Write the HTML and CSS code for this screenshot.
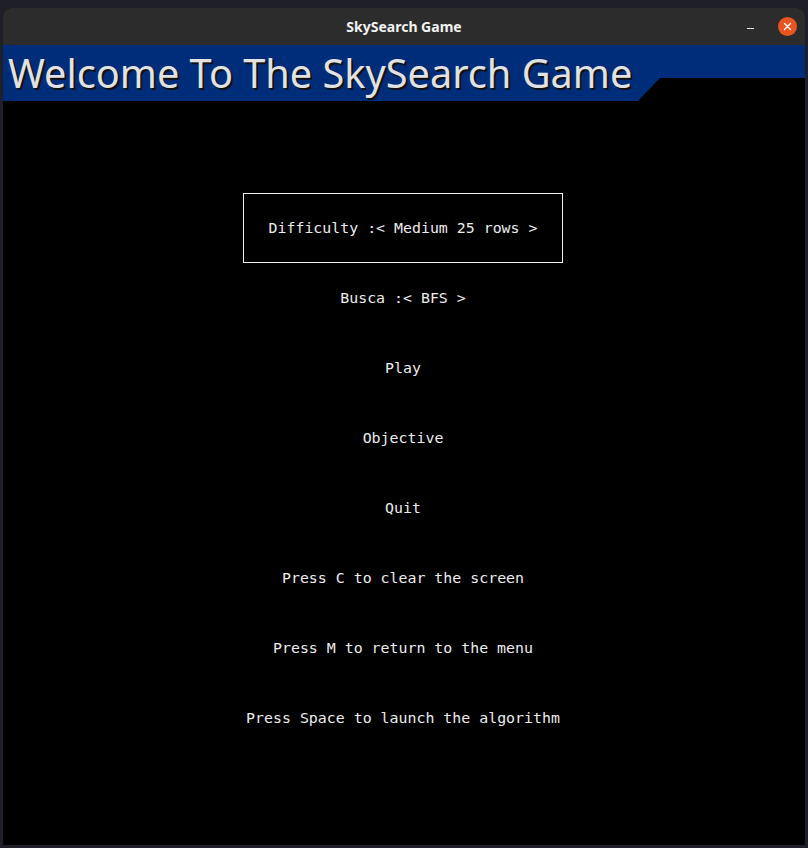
FILE: index.html
```html
<!DOCTYPE html>
<html>
<head>
<meta charset="utf-8">
<title>SkySearch Game</title>
<link rel="stylesheet" href="styles.css">
</head>
<body>
<div class="window">
  <div class="titlebar">
    <span class="title">SkySearch Game</span>
    <div class="controls">
      <span class="minimize"></span>
      <span class="close">
        <svg width="19" height="19" viewBox="0 0 19 19"><circle cx="9.5" cy="9.5" r="9.5" fill="#e95420"/><path d="M6.5 6.5 L12.5 12.5 M12.5 6.5 L6.5 12.5" stroke="#fff" stroke-width="1.3" stroke-linecap="round"/></svg>
      </span>
    </div>
  </div>
  <div class="content">
    <div class="banner">
      <h1 class="heading">Welcome To The SkySearch Game</h1>
    </div>
    <div class="menu">
      <div class="item selected">Difficulty :&lt; Medium 25 rows &gt;</div>
      <div class="item">Busca :&lt; BFS &gt;</div>
      <div class="item">Play</div>
      <div class="item">Objective</div>
      <div class="item">Quit</div>
      <div class="item">Press C to clear the screen</div>
      <div class="item">Press M to return to the menu</div>
      <div class="item">Press Space to launch the algorithm</div>
    </div>
  </div>
</div>
</body>
</html>
```
FILE: styles.css
```css
html, body {
  margin: 0;
  padding: 0;
  background: #1e1f29;
  width: 808px;
  height: 848px;
  overflow: hidden;
}
.window {
  margin: 8px 3px 0 3px;
  width: 802px;
  height: 837px;
  border-radius: 8px 8px 0 0;
  overflow: hidden;
  background: #000;
}
.titlebar {
  position: relative;
  height: 37px;
  background: #2c2c2c;
  display: flex;
  align-items: center;
  justify-content: center;
}
.title {
  font-family: "Noto Sans", "Open Sans", sans-serif;
  font-weight: 700;
  font-size: 14px;
  color: #f2f2f2;
}
.controls {
  position: absolute;
  right: 8px;
  top: 9px;
  display: flex;
  align-items: center;
  gap: 24px;
}
.minimize {
  display: block;
  width: 7px;
  height: 1px;
  margin-top: 4px;
  background: #e8e8e8;
}
.close {
  display: block;
  width: 19px;
  height: 19px;
}
.close svg { display: block; }
.content {
  background: #000;
  height: 800px;
}
.banner {
  height: 56px;
  background: #002d7a;
  clip-path: polygon(0 0, 100% 0, 100% 33px, 657px 33px, 635px 56px, 0 56px);
  overflow: hidden;
}
.heading {
  margin: 0;
  padding: 0 0 0 5px;
  font-family: "Noto Sans", "Open Sans", sans-serif;
  font-weight: 400;
  font-size: 39.7px;
  line-height: 56px;
  color: #e2e2e2;
  text-shadow: 2px 2px 0 #111;
  white-space: nowrap;
}
.menu {
  margin-top: 92px;
  padding-right: 2px;
  display: flex;
  flex-direction: column;
  align-items: center;
}
.item {
  box-sizing: border-box;
  height: 70px;
  width: 320px;
  display: flex;
  align-items: center;
  justify-content: center;
  font-family: "DejaVu Sans Mono", monospace;
  font-size: 14.9px;
  color: #ececec;
  white-space: nowrap;
}
.item.selected {
  border: 1px solid #f0f0f0;
}
```
